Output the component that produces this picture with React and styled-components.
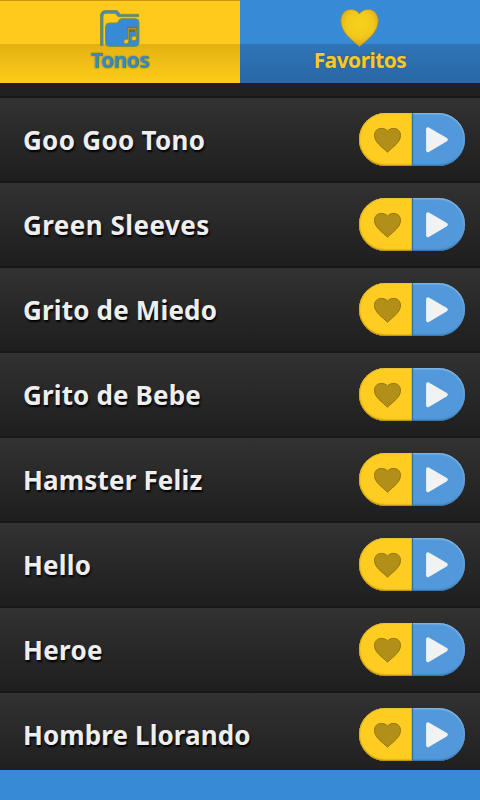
import styled, { createGlobalStyle } from "styled-components"

const GlobalStyle = createGlobalStyle`
body {
margin: 0;
background-color: #368ad6;
font-family: "Noto Sans", "Open Sans", sans-serif;
}
`;

const Container = styled.div`
width: 480px;
height: 800px;
display: flex;
flex-direction: column;
overflow: hidden;
background-color: #368ad6;
`;

const Tabs = styled.div`
display: flex;
height: 83px;
flex-shrink: 0;
`;

const Tab = styled.button`
flex: 1;
box-sizing: border-box;
display: flex;
flex-direction: column;
align-items: center;
border: none;
padding: 8px 0 0;
cursor: pointer;
font-family: inherit;
color: ${props => props.$active ? "#3a86c4" : "#fbc926"};
background: ${props => props.$active
    ? "linear-gradient(#c69b10 0 1px, #ffca1b 1px 44px, #e2b213 44px, #ffcb1b 83px)"
    : "linear-gradient(#368ad6 0 44px, #3074b8 44px, #2868a4 83px)"};
`;

const TabIcon = styled.svg`
display: block;
height: 40px;
overflow: visible;
`;

const TabLabel = styled.span`
font-size: 21px;
font-weight: 700;
line-height: 25px;
letter-spacing: -0.55px;
text-shadow: 0 0 1px ${props => props.$shadow}, 0 0 2px ${props => props.$shadow};
`;

const List = styled.div`
height: 687px;
overflow: hidden;
display: flex;
flex-direction: column;
background-color: #202020;
`;

const Row = styled.div`
height: 85px;
flex-shrink: 0;
box-sizing: border-box;
display: flex;
align-items: center;
justify-content: space-between;
padding: 0 15px 0 23px;
border-bottom: 2px solid #181818;
background: linear-gradient(#323232, #1e1e1e);
`;

const FirstRow = styled(Row)`
height: 15px;
background: #202020;
`;

const Title = styled.span`
font-size: 26px;
font-weight: 700;
line-height: 36px;
letter-spacing: ${props => props.$spacing}px;
color: #eeeeee;
text-shadow: 1px 2px 2px #000000;
`;

const Actions = styled.div`
width: 106px;
height: 53px;
display: flex;
`;

const Action = styled.button`
flex: 1;
display: flex;
border: none;
padding: 0;
cursor: pointer;
`;

const FavButton = styled(Action)`
border-radius: 27px 0 0 27px;
background-color: #ffcd22;
box-shadow: inset 0 -2px 2px -1px #a98408, inset 1px 0 1px #dcae1c, inset 0 1px 1px #e8c548, inset -1px 0 0 #e2b423;
`;

const PlayButton = styled(Action)`
border-radius: 0 27px 27px 0;
background-color: #5199da;
box-shadow: inset 1px 0 1px #2f6ca4, inset 0 -2px 2px -1px #2f6ca4, inset 0 2px 2px -1px #9ac6ec, inset -1px 0 2px #6faae0;
`;

const Glyph = styled.svg`
display: block;
width: 53px;
height: 53px;
`;

const songs = [
    { title: "Goo Goo Tono", spacing: 0.3 },
    { title: "Green Sleeves", spacing: 0.47 },
    { title: "Grito de Miedo", spacing: 0.17 },
    { title: "Grito de Bebe", spacing: 0.15 },
    { title: "Hamster Feliz", spacing: 0.17 },
    { title: "Hello", spacing: 0.2 },
    { title: "Heroe", spacing: 0.3 },
    { title: "Hombre Llorando", spacing: 0.1 },
];

const FolderIcon = () => (
    <TabIcon width="40" viewBox="0 0 40 40">
        <g stroke="#7d9140" strokeWidth="1" strokeLinejoin="round">
            <path d="M0.5 37.5V8Q0.5 2.5 6 2.5H15.5Q17.5 2.5 18.5 4L20 6.3H38.5V8.7H19Q17.8 8.7 17 7.5L15.5 5.2H6Q3 5.2 3 8V37.5Z" fill="#368ad6" />
            <path d="M5.5 19Q5.5 15 9.5 15H16Q18 15 18.5 13Q19.5 10.7 22 10.7H35.5Q39 10.7 39 14.5V34.5Q39 38.5 35 38.5H9.5Q5.5 38.5 5.5 34.5Z" fill="#368ad6" />
        </g>
        <path d="M28.3 33V19.8H36V30.5M28.3 23H36" fill="none" stroke="#746f22" strokeWidth="2" />
        <g fill="#f3c61f" stroke="#857d25" strokeWidth=".7">
            <ellipse cx="26.3" cy="33.5" rx="2.6" ry="2.3" transform="rotate(-25 26.3 33.5)" />
            <ellipse cx="34" cy="30.4" rx="2.6" ry="2.3" transform="rotate(-25 34 30.4)" />
        </g>
        <path d="M28.3 33V20.3H36V30" fill="none" stroke="#c6a726" strokeWidth=".8" />
    </TabIcon>
)

const BigHeart = () => (
    <TabIcon width="40" viewBox="0 0 40 40">
        <defs>
            <radialGradient id="gold" cx=".5" cy=".4" r=".62">
                <stop offset="0" stopColor="#f5d31c" />
                <stop offset=".6" stopColor="#f1c71c" />
                <stop offset="1" stopColor="#d99d1c" />
            </radialGradient>
        </defs>
        <path d="M19.5 5.8C17.3 2.8 14 1.4 10.8 1.4C4.8 1.4 0.8 6.2 0.8 12.8C0.8 24 10.8 31.5 19.5 38.5C28.3 31.5 38.3 24 38.3 12.8C38.3 6.2 34.3 1.4 28.3 1.4C24.8 1.4 21.7 2.8 19.5 5.8Z" fill="url(#gold)" stroke="#8a914f" strokeWidth="1" />
    </TabIcon>
)

const Slider = ({ title, spacing }) => (
    <Row>
        <Title $spacing={spacing}>{title}</Title>
        <Actions>
            <FavButton aria-label="Favorito">
                <Glyph viewBox="0 0 53 53">
                    <path d="M28.5 18C26.8 16 24.6 15.4 22.2 15.4C18.2 15.4 15.5 18.2 15.5 22.4C15.5 29.3 23 33.8 28.5 39.2C34 33.8 41.5 29.3 41.5 22.4C41.5 18.2 38.8 15.4 34.8 15.4C32.4 15.4 30.2 16 28.5 18Z" fill="#b18f19" stroke="#967711" strokeWidth="1" />
                </Glyph>
            </FavButton>
            <PlayButton aria-label="Reproducir">
                <Glyph viewBox="0 0 53 53">
                    <path d="M15.9 16L34 26.6L15.9 37.4Z" fill="#f2f2f2" stroke="#f2f2f2" strokeWidth="3.6" strokeLinejoin="round" />
                </Glyph>
            </PlayButton>
        </Actions>
    </Row>
)

const App = () => {
    return (
        <Container>
            <GlobalStyle />
            <Tabs>
                <Tab $active>
                    <FolderIcon />
                    <TabLabel $shadow="#8b8429">Tonos</TabLabel>
                </Tab>
                <Tab>
                    <BigHeart />
                    <TabLabel $shadow="#365f72">Favoritos</TabLabel>
                </Tab>
            </Tabs>
            <List>
                <FirstRow />
                {songs.map(song => <Slider key={song.title} {...song} />)}
            </List>
        </Container>
    )
}

export default App
